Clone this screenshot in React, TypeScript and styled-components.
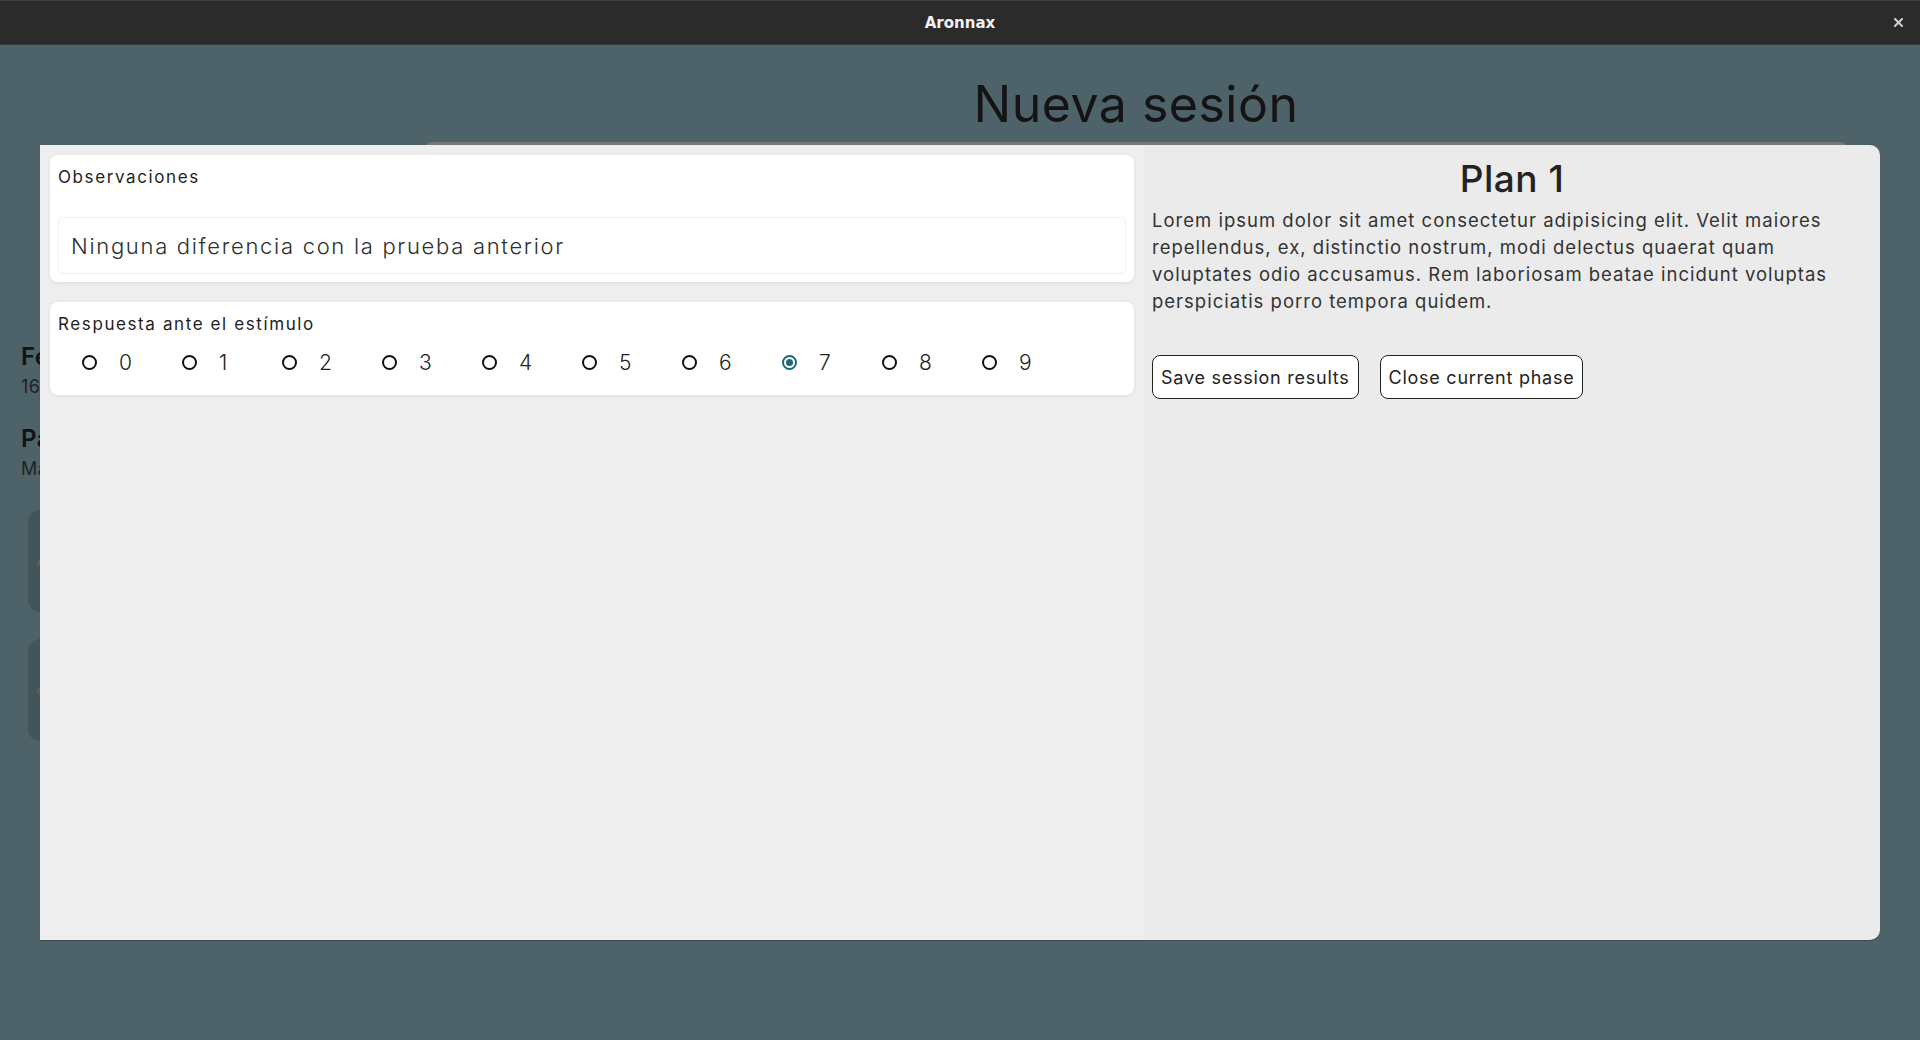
import React, { useState } from "react";
import styled, { createGlobalStyle } from "styled-components";

const GlobalStyle = createGlobalStyle`
  html, body { margin: 0; padding: 0; height: 100%; }
  body { font-family: Inter, "Noto Sans", sans-serif; overflow: hidden; }
  #root { height: 100%; }
  * { box-sizing: border-box; }
`;

const Window = styled.div`
  height: 100vh;
  display: flex;
  flex-direction: column;
`;

const TitleBar = styled.header`
  height: 45px;
  flex: 0 0 45px;
  background: #2b2b2b;
  border-top: 1px solid #3d3d3d;
  border-bottom: 1px solid #3a3a3a;
  display: flex;
  align-items: center;
  justify-content: center;
  position: relative;
`;

const Title = styled.span`
  font-family: "DejaVu Sans", sans-serif;
  font-weight: 700;
  font-size: 15px;
  color: #f2f2f2;
`;

const CloseButton = styled.button`
  position: absolute;
  right: 14px;
  top: 50%;
  transform: translateY(-50%);
  width: 16px;
  height: 16px;
  padding: 0;
  border: none;
  background: transparent;
  display: flex;
  align-items: center;
  justify-content: center;
`;

const AppArea = styled.div`
  flex: 1;
  position: relative;
  display: flex;
  background: #a6d0df;
  overflow: hidden;
`;

const Sidebar = styled.aside`
  width: 352px;
  flex: 0 0 352px;
  padding: 297px 0 0 21px;
  display: flex;
  flex-direction: column;
`;

const SideLabel = styled.div`
  font-size: 24px;
  line-height: 30px;
  font-weight: 600;
  color: #2a2a2a;
  letter-spacing: 0.5px;
`;

const SideValue = styled.div`
  font-size: 18px;
  line-height: 26px;
  color: #4a4a4a;
  margin: 2px 0 24px;
  letter-spacing: 0.5px;
`;

const SideCard = styled.div`
  margin: 4px 0 23px 7px;
  height: 102px;
  width: 300px;
  border-radius: 12px;
  background: #8db4c0;
  display: flex;
  align-items: center;
  padding-left: 9px;
  font-size: 12px;
  color: #dfe9ec;
`;

const Main = styled.main`
  flex: 1;
  display: flex;
  flex-direction: column;
  align-items: stretch;
  padding: 29px 71px 0;
`;

const PageTitle = styled.h1`
  margin: 0;
  font-size: 50px;
  line-height: 60px;
  font-weight: 400;
  text-align: center;
  color: #2c2c2c;
  letter-spacing: 0.5px;
`;

const SessionCard = styled.section`
  margin-top: 8px;
  height: 700px;
  background: #ffffff;
  border-radius: 10px;
`;

const Overlay = styled.div`
  position: absolute;
  inset: 0;
  background: rgba(0, 0, 0, 0.53);
`;

const Modal = styled.div`
  position: absolute;
  top: 100px;
  left: 40px;
  right: 40px;
  bottom: 100px;
  display: grid;
  grid-template-columns: 60% 40%;
  border-radius: 0 10px 10px 0;
  overflow: hidden;
  box-shadow: 0 1px 1px rgba(0, 0, 0, 0.25);
`;

const LeftPane = styled.div`
  background: #eeeeee;
  padding: 10px;
  display: flex;
  flex-direction: column;
  gap: 20px;
`;

const RightPane = styled.div`
  background: #ebebeb;
  padding: 12px 8px 8px;
  display: flex;
  flex-direction: column;
  align-items: stretch;
`;

const Card = styled.div`
  background: #ffffff;
  border-radius: 8px;
  padding: 10px 8px 8px;
  box-shadow: 0 1px 4px rgba(0, 0, 0, 0.07);
`;

const FieldLabel = styled.div`
  font-size: 17px;
  line-height: 24px;
  color: #1e1e1e;
  letter-spacing: 1.6px;
`;

const TextInput = styled.input`
  display: block;
  width: 100%;
  margin-top: 28px;
  height: 57px;
  border: 1px solid #f0f0f0;
  border-radius: 4px;
  padding: 0 12px;
  font-family: inherit;
  font-size: 22px;
  font-weight: 300;
  letter-spacing: 1.7px;
  color: #2e2e2e;
  background: #ffffff;
  outline: none;
`;

const RadioRow = styled.div`
  margin-top: 1px;
  height: 50px;
  display: flex;
  align-items: center;
  padding-left: 24px;
`;

const RadioItem = styled.label`
  width: 100px;
  flex: 0 0 100px;
  display: flex;
  align-items: center;
  gap: 22px;
  cursor: pointer;
`;

const RadioCircle = styled.span<{ $checked: boolean }>`
  width: 15px;
  height: 15px;
  border-radius: 50%;
  border: 2px solid ${(p) => (p.$checked ? "#17697d" : "#111111")};
  display: flex;
  align-items: center;
  justify-content: center;
  &::after {
    content: "";
    width: 7px;
    height: 7px;
    border-radius: 50%;
    background: ${(p) => (p.$checked ? "#17697d" : "transparent")};
  }
`;

const RadioText = styled.span`
  font-size: 21px;
  font-weight: 300;
  color: #222;
`;

const PlanTitle = styled.h2`
  margin: 0;
  font-size: 37px;
  line-height: 44px;
  font-weight: 500;
  text-align: center;
  color: #232323;
  letter-spacing: 0.5px;
`;

const PlanText = styled.p`
  margin: 6px 0 0;
  font-size: 18.5px;
  line-height: 27px;
  font-weight: 400;
  color: #333;
  letter-spacing: 1px;
`;

const ButtonRow = styled.div`
  margin-top: 40px;
  display: flex;
  gap: 21px;
`;

const OutlineButton = styled.button`
  height: 44px;
  padding: 0 8px;
  border: 1px solid #222;
  border-radius: 8px;
  background: #ffffff;
  font-family: inherit;
  font-size: 18px;
  letter-spacing: 0.75px;
  color: #222;
  cursor: pointer;
`;

export default function App() {
  const [value, setValue] = useState(7);
  const [obs, setObs] = useState("Ninguna diferencia con la prueba anterior");
  return (
    <>
      <GlobalStyle />
      <Window>
        <TitleBar>
          <Title>Aronnax</Title>
          <CloseButton aria-label="Cerrar">
            <svg width="9" height="9" viewBox="0 0 9 9">
              <path d="M1 1 L8 8 M8 1 L1 8" stroke="#cfcfcf" strokeWidth="2" strokeLinecap="square" />
            </svg>
          </CloseButton>
        </TitleBar>
        <AppArea>
          <Sidebar>
            <SideLabel>Fecha</SideLabel>
            <SideValue>16/05/2023</SideValue>
            <SideLabel>Paciente</SideLabel>
            <SideValue>María López</SideValue>
            <SideCard>Añadir</SideCard>
            <SideCard>cargar</SideCard>
          </Sidebar>
          <Main>
            <PageTitle>Nueva sesión</PageTitle>
            <SessionCard />
          </Main>
          <Overlay />
          <Modal>
            <LeftPane>
              <Card>
                <FieldLabel>Observaciones</FieldLabel>
                <TextInput value={obs} onChange={(e) => setObs(e.target.value)} />
              </Card>
              <Card>
                <FieldLabel>Respuesta ante el estímulo</FieldLabel>
                <RadioRow>
                  {Array.from({ length: 10 }, (_, i) => (
                    <RadioItem key={i} onClick={() => setValue(i)}>
                      <RadioCircle $checked={value === i} />
                      <RadioText>{i}</RadioText>
                    </RadioItem>
                  ))}
                </RadioRow>
              </Card>
            </LeftPane>
            <RightPane>
              <PlanTitle>Plan 1</PlanTitle>
              <PlanText>
                Lorem ipsum dolor sit amet consectetur adipisicing elit. Velit maiores repellendus, ex,
                distinctio nostrum, modi delectus quaerat quam voluptates odio accusamus. Rem laboriosam
                beatae incidunt voluptas perspiciatis porro tempora quidem.
              </PlanText>
              <ButtonRow>
                <OutlineButton>Save session results</OutlineButton>
                <OutlineButton>Close current phase</OutlineButton>
              </ButtonRow>
            </RightPane>
          </Modal>
        </AppArea>
      </Window>
    </>
  );
}
